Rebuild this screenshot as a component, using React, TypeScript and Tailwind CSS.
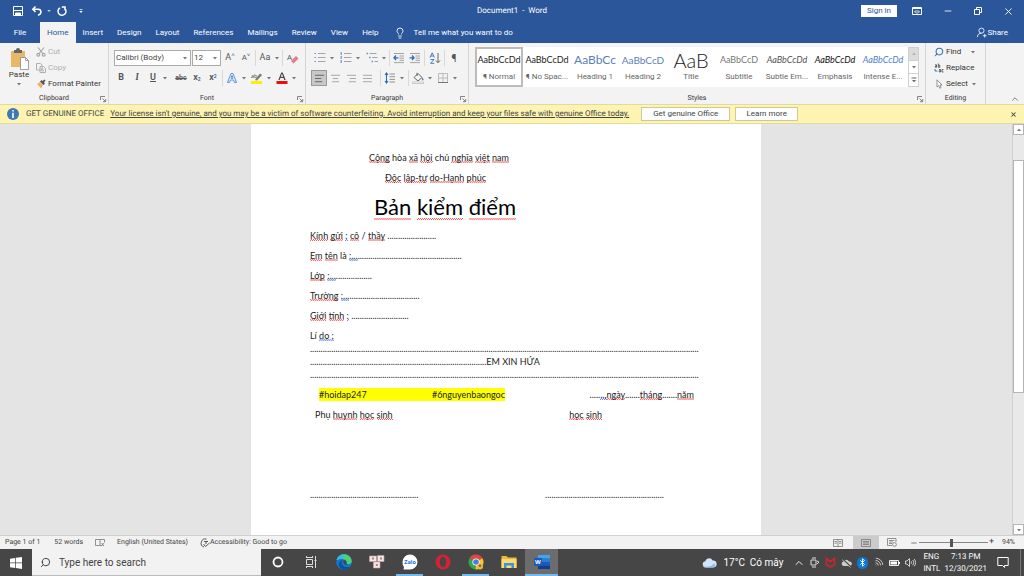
import type { ReactNode } from "react";
import {
  AlignCenter,
  AlignJustify,
  AlignLeft,
  AlignRight,
  Bluetooth,
  ChevronUp,
  Lightbulb,
  Minus,
  Search,
  Wifi,
  X,
} from "lucide-react";

const tabs = ["Home", "Insert", "Design", "Layout", "References", "Mailings", "Review", "View", "Help"];

const styleCards = [
  { name: "¶ Normal", sample: "AaBbCcDd", look: "text-[9px] text-[#222]" },
  { name: "¶ No Spac...", sample: "AaBbCcDd", look: "text-[9px] text-[#222]" },
  { name: "Heading 1", sample: "AaBbCc", look: "text-[12px] text-[#5b7fba]" },
  { name: "Heading 2", sample: "AaBbCcD", look: "text-[10px] text-[#5b7fba]" },
  { name: "Title", sample: "AaB", look: "text-[20px] text-[#222] font-light" },
  { name: "Subtitle", sample: "AaBbCcD", look: "text-[9px] text-[#777]" },
  { name: "Subtle Em...", sample: "AaBbCcDd", look: "text-[9px] text-[#555] italic" },
  { name: "Emphasis", sample: "AaBbCcDd", look: "text-[9px] text-[#111] italic" },
  { name: "Intense E...", sample: "AaBbCcDd", look: "text-[9px] text-[#4f81d0] italic" },
];

function Caret({ className = "" }: { className?: string }) {
  return (
    <svg viewBox="0 0 8 8" className={`size-2 shrink-0 ${className}`} aria-hidden="true">
      <path d="M2 3h4L4 5.4z" fill="#777" />
    </svg>
  );
}

function Divider() {
  return <span className="mx-px h-4 w-px shrink-0 bg-[#d8d8d8]" />;
}

function Tool({ label, children, className = "" }: { label: string; children: ReactNode; className?: string }) {
  return (
    <button aria-label={label} className={`flex h-4 w-4 shrink-0 items-center justify-center text-[#555] ${className}`}>
      {children}
    </button>
  );
}

function More({ label }: { label: string }) {
  return (
    <button aria-label={label} className="flex h-4 w-2 shrink-0 items-center justify-center">
      <Caret />
    </button>
  );
}

function Group({ name, width, launcher = true, children }: { name: string; width: string; launcher?: boolean; children: ReactNode }) {
  return (
    <section className={`flex flex-col border-r border-[#d4d4d4] ${width}`}>
      <div className="h-[50px]">{children}</div>
      <footer className="flex items-center px-px">
        <span className="w-2" />
        <h2 className="flex-1 text-center text-[7px] leading-[11px] text-[#333]">{name}</h2>
        {launcher ? (
          <button aria-label={`${name} settings`}>
            <svg viewBox="0 0 8 8" className="size-2" fill="none" stroke="#777" strokeWidth="0.9">
              <path d="M1.500 5V1.500H6M3.500 3.500L6.500 6.500M6.700 4V6.700H4" />
            </svg>
          </button>
        ) : (
          <span className="w-2" />
        )}
      </footer>
    </section>
  );
}

function Spell({ children }: { children: ReactNode }) {
  return (
    <span className="bg-[conic-gradient(#ee5555_25%,transparent_0_50%,#ee5555_0_75%,transparent_0)] bg-[length:2px_2px] bg-bottom bg-repeat-x">
      {children}
    </span>
  );
}

function Grammar({ children }: { children: ReactNode }) {
  return (
    <span className="bg-[conic-gradient(#5580e0_25%,transparent_0_50%,#5580e0_0_75%,transparent_0)] bg-[length:2px_2px] bg-bottom bg-repeat-x">
      {children}
    </span>
  );
}

function TitleBar() {
  return (
    <header className="grid h-[22px] shrink-0 grid-cols-3 items-center bg-[#2b579a] text-white">
      <div className="flex items-center pl-3">
        <button aria-label="Save">
          <svg viewBox="0 0 12 12" className="size-3" fill="none" stroke="white">
            <path d="M1.500 1.500h9v9h-9z" />
            <path d="M1.500 5.500h9" />
            <path d="M3.500 10.500V8h5v2.500z" fill="white" />
          </svg>
        </button>
        <button aria-label="Undo" className="ml-[7px]">
          <svg viewBox="0 0 12 12" className="size-3" fill="none" stroke="white" strokeWidth="1.500">
            <path d="M4.500 1.500L1.800 4.200l2.700 2.700M2 4.200H7c3.800 0 4 5 0 6" />
          </svg>
        </button>
        <svg viewBox="0 0 8 8" className="ml-[2px] size-2">
          <path d="M2.200 3h3.600L4 5z" fill="#c5d2e8" />
        </svg>
        <button aria-label="Redo" className="ml-[3px]">
          <svg viewBox="0 0 12 12" className="size-3" fill="none" stroke="white" strokeWidth="1.500">
            <path d="M4 2.800A4 4 0 1 0 8.300 3M5.800 2H9v3.200" />
          </svg>
        </button>
        <button aria-label="Customize toolbar" className="ml-[9px]">
          <svg viewBox="0 0 8 8" className="size-2">
            <path d="M2.500 2h3v.8h-3zM2.300 4h3.400L4 6z" fill="white" />
          </svg>
        </button>
      </div>
      <h1 className="text-center text-[8px]">Document1&nbsp; -&nbsp; Word</h1>
      <div className="flex items-center justify-end">
        <button className="h-3 w-9 bg-white text-[8px] leading-3 text-[#2b579a]">Sign in</button>
        <button aria-label="Ribbon options" className="ml-[15px]">
          <svg viewBox="0 0 10 8" className="h-2 w-[10px]" fill="none" stroke="white">
            <path d="M.5.5h9v7h-9zM.5 1.500h9" />
            <path d="M3.200 6V4M2.500 4.500L3.300 3.500M6.800 6V4M7.500 4.500L6.700 3.500M5 3v4" strokeWidth=".8" />
          </svg>
        </button>
        <button aria-label="Minimize" className="ml-[21px]">
          <Minus className="size-[10px]" strokeWidth={2} />
        </button>
        <button aria-label="Restore" className="ml-5">
          <svg viewBox="0 0 10 10" className="size-[10px]" fill="none" stroke="white">
            <path d="M1.500 3.500h5v5h-5zM3.500 3V1.500h5v5H7" />
          </svg>
        </button>
        <button aria-label="Close" className="mr-[10px] ml-5">
          <X className="size-[11px]" strokeWidth={2} />
        </button>
      </div>
    </header>
  );
}

function TabBar() {
  return (
    <nav className="flex h-[21px] shrink-0 items-stretch bg-[#2b579a] text-[8px] text-white">
      <button className="w-10">File</button>
      {tabs.map((tab) => (
        <button key={tab} className={tab === "Home" ? "bg-[#f3f3f3] px-[7px] text-[#2b579a]" : "px-[7px]"}>
          {tab}
        </button>
      ))}
      <button className="ml-2 flex items-center gap-2">
        <Lightbulb className="size-3" strokeWidth={1.700} />
        Tell me what you want to do
      </button>
      <button className="mr-4 ml-auto flex items-center gap-px">
        <svg viewBox="0 0 12 12" className="size-[11px]" fill="none" stroke="white" strokeWidth=".9">
          <circle cx="6" cy="4" r="2.800" />
          <path d="M1.500 11c0-3 2-4.200 4.500-4.200M9.500 7.500v4M7.500 9.500h4" />
        </svg>
        Share
      </button>
    </nav>
  );
}

function ClipboardGroup() {
  return (
    <Group name="Clipboard" width="w-[109px] shrink-0">
      <div className="flex gap-[3px] pt-px pl-[9px]">
        <button className="flex w-5 flex-col items-center pt-1 text-[8px] leading-[10px] text-[#333]">
          <svg viewBox="0 0 20 22" className="h-[22px] w-5">
            <path d="M2 3h14v16H2z" fill="#e8b866" />
            <path d="M5 2h2a2 2 0 0 1 4 0h2v3H5z" fill="#666" />
            <path d="M11.500 9.500h5l3 3v9h-8z" fill="white" stroke="#888" strokeWidth=".8" />
            <path d="M16.500 9.500v3h3" fill="none" stroke="#888" strokeWidth=".8" />
          </svg>
          Paste
          <Caret />
        </button>
        <div className="flex flex-col pl-1 text-[8px] text-[#333]">
          <button className="flex h-4 items-center gap-[2px] text-[#b0b0b0]">
            <svg viewBox="0 0 10 10" className="size-[10px]" fill="none" stroke="#a8a8a8" strokeWidth="1.200">
              <path d="M2 .5l4.800 6M8 .5L3.200 6.500" />
              <circle cx="2.300" cy="7.700" r="1.400" />
              <circle cx="7.700" cy="7.700" r="1.400" />
            </svg>
            Cut
          </button>
          <button className="flex h-4 items-center gap-[2px] text-[#b0b0b0]">
            <svg viewBox="0 0 10 10" className="size-[10px]" fill="#f3f3f3" stroke="#b0b0b0">
              <path d="M.5.5h4l1.500 1.500v5H.5zM4 3.500h3.500l2 2v4H4zM5.500 6h2M5.500 7.800h2.500" />
            </svg>
            Copy
          </button>
          <button className="flex h-4 items-center gap-[2px] whitespace-nowrap">
            <svg viewBox="0 0 10 10" className="size-[10px]">
              <path d="M1 5l3-2 3 3-2 3.500z" fill="#e9b560" />
              <path d="M4 2.500l3.500 3.500L9 4.500 8 3.500 9.500 1.500 8.500.5 6.500 2 5.500 1z" fill="#555" />
            </svg>
            Format Painter
          </button>
        </div>
      </div>
    </Group>
  );
}

function FontGroup() {
  return (
    <Group name="Font" width="w-[197px] shrink-0">
      <div className="flex items-center pt-[7px] pl-[5px]">
        <label className="relative flex h-4 w-[77px] items-center border border-[#ababab] bg-white">
          <select aria-label="Font name" className="w-full appearance-none px-px text-[8px] text-[#444]">
            <option>Calibri (Body)</option>
          </select>
          <Caret className="pointer-events-none absolute right-px" />
        </label>
        <label className="relative ml-px flex h-4 w-[29px] items-center border border-[#ababab] bg-white">
          <select aria-label="Font size" className="w-full appearance-none px-px text-[8px] text-[#444]">
            <option>12</option>
          </select>
          <Caret className="pointer-events-none absolute right-px" />
        </label>
        <Tool label="Grow font" className="ml-px text-[9px]">
          A<sup className="text-[6px] text-[#2b579a]">˄</sup>
        </Tool>
        <Tool label="Shrink font" className="text-[8px]">
          A<sup className="text-[6px] text-[#2b579a]">˅</sup>
        </Tool>
        <Divider />
        <Tool label="Change case" className="text-[9px]">Aa</Tool>
        <More label="Case options" />
        <Divider />
        <Tool label="Clear formatting" className="ml-px">
          <svg viewBox="0 0 12 12" className="size-3">
            <text x="0" y="8" fontSize="8" fill="#555" fontFamily="Open Sans">A</text>
            <path d="M4 9l5-5 2.500 2.500-5 5z" fill="#e8788a" />
          </svg>
        </Tool>
      </div>
      <div className="flex items-center pt-1 pl-1 text-[9px]">
        <Tool label="Bold" className="font-bold">B</Tool>
        <Tool label="Italic" className="font-serif font-bold italic">I</Tool>
        <Tool label="Underline" className="font-semibold underline">U</Tool>
        <More label="Underline options" />
        <Tool label="Strikethrough" className="ml-1 text-[7px] font-semibold line-through">abc</Tool>
        <Tool label="Subscript" className="font-semibold">
          x<sub className="text-[5px] text-[#2b579a]">2</sub>
        </Tool>
        <Tool label="Superscript" className="font-semibold">
          x<sup className="text-[5px] text-[#2b579a]">2</sup>
        </Tool>
        <Divider />
        <Tool label="Text effects">
          <svg viewBox="0 0 12 12" className="size-3" fill="none" stroke="#5b93d6" strokeWidth="1">
            <path d="M1.500 10.500L5 1.500h2l3.500 9h-2l-.9-2.500H4.400l-.9 2.500zM5 6.300h2L6 3.500z" />
          </svg>
        </Tool>
        <More label="Text effect options" />
        <Tool label="Highlight" className="ml-px">
          <svg viewBox="0 0 12 12" className="size-3">
            <text x="0" y="5.500" fontSize="5.500" fill="#444" fontFamily="Open Sans">ab</text>
            <path d="M4 8l5-6.500 2 1.500-5 5.500z" fill="#777" />
            <path d="M0 9h11v3H0z" fill="#ffee00" />
          </svg>
        </Tool>
        <More label="Highlight colours" />
        <Tool label="Font colour" className="ml-px">
          <svg viewBox="0 0 12 12" className="size-3">
            <path d="M2.300 8L5.300.5h1.400l3 7.500H8.300l-.7-2H4.300l-.7 2zM4.700 4.800h2.500L6 1.800z" fill="#444" />
            <path d="M.5 9h11v3H.5z" fill="#e81010" />
          </svg>
        </Tool>
        <More label="Font colours" />
      </div>
    </Group>
  );
}

function ListIcon({ dots }: { dots: string }) {
  return (
    <svg viewBox="0 0 12 12" className="size-3" fill="none">
      <path d={dots} stroke="#6a93c5" strokeWidth="1.200" />
      <path d="M4 1.500h7.500M4 5.500h7.500M4 9.500h7.500" stroke="#a5a5a5" />
    </svg>
  );
}

function DentIcon({ arrow }: { arrow: string }) {
  return (
    <svg viewBox="0 0 12 12" className="size-3" fill="none">
      <path d="M1 1.500h10M6.500 4h4.500M6.500 6.200h4.500M6.500 8.400h4.500M1 10.600h10" stroke="#999" strokeWidth=".9" />
      <path d={arrow} stroke="#2b6cb5" strokeWidth="1.300" />
    </svg>
  );
}

function ParagraphGroup() {
  return (
    <Group name="Paragraph" width="w-[163px] shrink-0">
      <div className="flex items-center pt-[7px] pl-[6px]">
        <Tool label="Bullets"><ListIcon dots="M.5 1.500h1.500M.5 5.500h1.500M.5 9.500h1.500" /></Tool>
        <More label="Bullet options" />
        <Tool label="Numbering" className="ml-[2px]"><ListIcon dots="M1.200 0v3M1.200 4v3M1.200 8v3" /></Tool>
        <More label="Numbering options" />
        <Tool label="Multilevel list" className="ml-[2px]">
          <svg viewBox="0 0 12 12" className="size-3" fill="none">
            <path d="M.5 1.500h1.500M3 5.500h1.500M5.500 9.500h1.500" stroke="#6a93c5" strokeWidth="1.400" />
            <path d="M3.500 1.500h7M6 5.500h5.500M8.500 9.500H12" stroke="#a5a5a5" />
          </svg>
        </Tool>
        <More label="Multilevel options" />
        <Divider />
        <Tool label="Decrease indent"><DentIcon arrow="M5.500 5.800H1M3 3.500L1 5.800 3 8" /></Tool>
        <Tool label="Increase indent"><DentIcon arrow="M.5 5.800H5M3 3.500l2 2.300L3 8" /></Tool>
        <Divider />
        <Tool label="Sort" className="ml-px">
          <svg viewBox="0 0 12 12" className="size-3" fill="none" stroke="#4a7ebb">
            <path d="M1 5.500L3.200.8l2.200 4.700M1.800 4h2.800M1.500 7.500h3.500L1.500 11.300H5.300" />
            <path d="M9 1v9.500M7 8.500l2 2.300 2-2.300" stroke="#666" />
          </svg>
        </Tool>
        <Divider />
        <Tool label="Show marks" className="text-[10px]">¶</Tool>
      </div>
      <div className="flex items-center pt-1 pl-[5px]">
        <Tool label="Align left" className="border border-[#999] bg-[#c8c8c8]"><AlignLeft className="size-[11px]" strokeWidth={1.800} /></Tool>
        <Tool label="Centre"><AlignCenter className="size-[11px] text-[#777]" strokeWidth={1.300} /></Tool>
        <Tool label="Align right"><AlignRight className="size-[11px] text-[#777]" strokeWidth={1.300} /></Tool>
        <Tool label="Justify"><AlignJustify className="size-[11px] text-[#777]" strokeWidth={1.300} /></Tool>
        <span className="w-1" />
        <Divider />
        <Tool label="Line spacing">
          <svg viewBox="0 0 12 12" className="size-3" fill="none">
            <path d="M2.500 1v10M1 3l1.500-2L4 3M1 9l1.500 2L4 9" stroke="#2b6cb5" strokeWidth="1.100" />
            <path d="M5.500 2h5.500M5.500 4.700h5.500M5.500 7.400h5.500M5.500 10h5.500" stroke="#888" strokeWidth=".9" />
          </svg>
        </Tool>
        <More label="Line spacing options" />
        <span className="w-px" />
        <Divider />
        <Tool label="Shading">
          <svg viewBox="0 0 12 12" className="size-3" fill="none">
            <path d="M2 5.500l4-4 4 4-4 3.500zM5 4V.8" stroke="#666" />
            <path d="M10.500 5.500c1.500 2 1 3 .3 3s-1-1-.3-3z" fill="#2b6cb5" />
            <path d="M.5 10h11v1.500H.5z" fill="white" stroke="#aaa" strokeWidth=".6" />
          </svg>
        </Tool>
        <More label="Shading options" />
        <Tool label="Borders" className="ml-px">
          <svg viewBox="0 0 12 12" className="size-3" fill="none">
            <path d="M1.500 1.500h9v9h-9zM6 1.500v9M1.500 6h9" stroke="#bbb" />
            <path d="M1 10.500h10" stroke="#777" />
          </svg>
        </Tool>
        <More label="Border options" />
      </div>
    </Group>
  );
}

function StylesGroup() {
  return (
    <Group name="Styles" width="min-w-0 flex-1">
      <div className="flex pt-1 pr-[6px] pl-[6px]">
        <div className="flex h-10 min-w-0 flex-1 overflow-hidden bg-white">
          {styleCards.map((card, i) => (
            <button
              key={card.name}
              className={`flex h-10 w-12 shrink-0 flex-col overflow-hidden border-2 ${i === 0 ? "border-[#bcbcbc]" : "border-transparent"}`}
            >
              <span className={`flex h-[22px] w-full items-center justify-center font-['Lato','Open_Sans',sans-serif] leading-[22px] whitespace-nowrap ${card.look}`}>
                {card.sample}
              </span>
              <span className="w-full text-center text-[8px] leading-3 whitespace-nowrap text-[#666]">{card.name}</span>
            </button>
          ))}
        </div>
        <div className="flex h-10 w-[11px] shrink-0 flex-col border border-[#d0d0d0] bg-white">
          <button aria-label="Previous styles" className="flex flex-1 items-center justify-center bg-[#dcdcdc]"><Caret className="rotate-180 opacity-40" /></button>
          <button aria-label="Next styles" className="flex flex-1 items-center justify-center border-y border-[#d0d0d0]"><Caret /></button>
          <button aria-label="All styles" className="flex flex-1 items-center justify-center">
            <svg viewBox="0 0 8 8" className="size-2" fill="#666">
              <path d="M1.500 1.500h5v.9h-5zM2 4h4L4 6.200z" />
            </svg>
          </button>
        </div>
      </div>
    </Group>
  );
}

function EditingGroup() {
  return (
    <Group name="Editing" width="w-[60px] shrink-0" launcher={false}>
      <div className="flex flex-col pt-px pl-2 text-[8px] text-[#333]">
        <button className="flex h-4 items-center gap-[2px]">
          <Search className="size-[10px] -scale-x-100 text-[#3b73b9]" strokeWidth={2.500} />
          Find
          <Caret className="ml-[6px]" />
        </button>
        <button className="flex h-4 items-center gap-[2px]">
          <svg viewBox="0 0 10 10" className="size-[10px]" fill="none" stroke="#555" strokeWidth=".9">
            <path d="M1 1.800h1.500V4.300H1.300V3h1.200M4.300.5v3.800h1.500V2.200H4.300M5 6.500h1.500V9H5.300V7.800h1.200M9.500 6.500H8V9h1.500" />
            <path d="M1 6v2h2.500" stroke="#2b6cb5" />
          </svg>
          Replace
        </button>
        <button className="flex h-4 items-center gap-[2px]">
          <svg viewBox="0 0 10 10" className="size-[10px]" fill="white" stroke="#888" strokeWidth=".9">
            <path d="M3 .8v7.200l1.700-1.500 1.200 2.800 1.200-.6L6 6h2z" />
          </svg>
          Select
          <Caret />
        </button>
      </div>
    </Group>
  );
}

function GenuineBar() {
  return (
    <aside className="flex h-5 shrink-0 items-center border-y border-[#e2daa0] bg-[#fcf4b0] pl-[7px] text-[8px] whitespace-nowrap text-[#444]">
      <svg viewBox="0 0 12 12" className="size-3 shrink-0">
        <circle cx="6" cy="6" r="6" fill="#3c78b8" />
        <path d="M5.200 2h1.600v1.600H5.200zM5.200 4.700h1.600V10H5.200z" fill="white" />
      </svg>
      <strong className="ml-[7px] font-normal">GET GENUINE OFFICE</strong>
      <a href="#genuine" className="ml-[6px] underline">
        Your license isn't genuine, and you may be a victim of software counterfeiting. Avoid interruption and keep your files safe with genuine Office today.
      </a>
      <button className="ml-3 h-[14px] w-[89px] border border-[#cfc99a] bg-[#fefefe] leading-3">Get genuine Office</button>
      <button className="ml-[5px] h-[14px] w-[63px] border border-[#cfc99a] bg-[#fefefe] leading-3">Learn more</button>
      <button aria-label="Dismiss" className="mr-[7px] ml-auto"><X className="size-[7px]" strokeWidth={3.500} /></button>
    </aside>
  );
}

function Paper() {
  return (
    <article className="mx-auto flex w-full max-w-[510px] flex-col gap-[7px] bg-white pt-[27px] pr-[61px] pl-[59px] font-['Lato','Open_Sans',sans-serif] text-[9px] leading-[13px] whitespace-nowrap text-[#222] [text-rendering:auto]">
      <p className="pl-[59px]"><Spell>Cộng</Spell> hòa <Spell>xã</Spell> <Spell>hội</Spell> chủ <Spell>nghĩa</Spell> <Spell>việt</Spell> <Spell>nam</Spell></p>
      <p className="pl-[75px]"><Spell>Độc</Spell> <Spell>lập-tự</Spell> <Spell>do-Hạnh</Spell> <Spell>phúc</Spell></p>
      <h2 className="pl-16 text-[22px] leading-[31px] text-black"><Spell>Bản</Spell> <Spell>kiểm</Spell> <Spell>điểm</Spell></h2>
      <p><Spell>Kính</Spell> <Spell>gửi</Spell> <Grammar>:</Grammar> <Spell>cô</Spell> / <Spell>thầy</Spell> {".".repeat(23)}</p>
      <p><Spell>Em</Spell> <Spell>tên</Spell> là <Grammar>:...</Grammar>{".".repeat(49)}</p>
      <p><Spell>Lớp</Spell> <Grammar>:...</Grammar>{".".repeat(17)}</p>
      <p><Spell>Trường</Spell> <Grammar>:...</Grammar>{".".repeat(33)}</p>
      <p><Spell>Giới</Spell> <Spell>tính</Spell> <Grammar>:</Grammar> {".".repeat(27)}</p>
      <div>
        <p>Lí <Grammar>do :</Grammar></p>
        <p>{".".repeat(183)}</p>
        <p>{".".repeat(83)}EM XIN HỨA</p>
        <p>{".".repeat(183)}</p>
      </div>
      <div className="flex justify-between pr-[6px] pl-[9px]">
        <p className="flex w-[186px] justify-between bg-[#ffff00]"><span>#hoidap247</span><span>#6nguyenbaongoc</span></p>
        <p>.....<Grammar>..,</Grammar><Spell>ngày</Spell>.......<Spell>tháng</Spell>.......<Spell>năm</Spell></p>
      </div>
      <div className="flex justify-between pr-[98px] pl-[5px]">
        <p>Phụ <Spell>huynh</Spell> <Spell>học</Spell> <Spell>sinh</Spell></p>
        <p><Spell>học</Spell> <Spell>sinh</Spell></p>
      </div>
      <div className="flex justify-between pt-[60px] pr-9">
        <p>{".".repeat(51)}</p>
        <p>{".".repeat(56)}</p>
      </div>
    </article>
  );
}

function DocumentArea() {
  return (
    <main className="flex min-h-0 flex-1 bg-[#e4e4e4]">
      <div className="flex min-w-0 flex-1 overflow-hidden">
        <Paper />
      </div>
      <div className="flex w-3 flex-col border-l border-[#d0d0d0] bg-[#e9e9e9]">
        <button aria-label="Scroll up" className="flex h-[11px] items-center justify-center border border-[#b5b5b5] bg-white"><Caret className="rotate-180" /></button>
        <div className="grow-[25]" />
        <div className="grow-[232] border border-[#b5b5b5] bg-white" />
        <div className="grow-[132]" />
        <button aria-label="Scroll down" className="flex h-[11px] items-center justify-center border border-[#b5b5b5] bg-white"><Caret /></button>
      </div>
    </main>
  );
}

function StatusBar() {
  return (
    <footer className="flex h-[14px] shrink-0 items-center border-t border-[#d0d0d0] bg-[#f2f2f2] pl-[5px] text-[7px] whitespace-nowrap text-[#444]">
      <span>Page 1 of 1</span>
      <span className="ml-[14px]">52 words</span>
      <svg viewBox="0 0 10 9" className="ml-3 h-[9px] w-[10px]" fill="none" stroke="#777" strokeWidth=".8">
        <path d="M5 1.500H.5v6H5zM5 1.500h4.500v3M5 7.500h2M6.500 5l2.500 3M9 5L6.500 8" />
      </svg>
      <span className="ml-3">English (United States)</span>
      <svg viewBox="0 0 10 10" className="ml-3 size-[10px]" fill="none" stroke="#555">
        <path d="M6.500 1.200A4 4 0 1 0 4 9M4 3.500h4M6 3.500V6M3.500 6l2 2.500L9.500 5" />
      </svg>
      <span>Accessibility: Good to go</span>
      <div className="ml-auto flex h-full items-center">
        <button aria-label="Read mode" className="flex w-6 justify-center">
          <svg viewBox="0 0 10 8" className="h-2 w-[10px]" fill="none" stroke="#777" strokeWidth=".8">
            <path d="M.5.5H5v7H.5zM5 .5h4.500v7H5M1.500 2.500h2.500M1.500 4.200h2.500M6 2.500h2.500M6 4.200h2.500" />
          </svg>
        </button>
        <button aria-label="Print layout" className="ml-[3px] flex h-full w-[26px] items-center justify-center bg-[#cbcbcb]">
          <svg viewBox="0 0 10 8" className="h-2 w-[10px]" fill="none" stroke="#777" strokeWidth=".8">
            <path d="M.5.5h9v7h-9zM2 2.500h6M2 4h6M2 5.500h6" />
          </svg>
        </button>
        <button aria-label="Web layout" className="flex w-[27px] justify-center">
          <svg viewBox="0 0 10 9" className="h-[9px] w-[10px]" fill="none" stroke="#777" strokeWidth=".8">
            <path d="M9 4V.5H.5v7H5M2 2.500h5.500M2 4h4M2 5.500h3" />
            <circle cx="7.500" cy="6.500" r="1.900" />
          </svg>
        </button>
        <button aria-label="Zoom out" className="ml-1"><Minus className="size-2" /></button>
        <input
          type="range"
          aria-label="Zoom"
          min={10}
          max={190}
          defaultValue={94}
          className="mx-px h-2 w-[69px] appearance-none bg-[linear-gradient(#888,#888)] bg-[length:100%_1px] bg-center bg-no-repeat [&::-webkit-slider-thumb]:h-2 [&::-webkit-slider-thumb]:w-[3px] [&::-webkit-slider-thumb]:appearance-none [&::-webkit-slider-thumb]:bg-[#555]"
        />
        <span className="text-[9px] leading-none">+</span>
        <span className="mr-[9px] ml-2">94%</span>
      </div>
    </footer>
  );
}

function TaskApp({ label, open = false, active = false, children }: { label: string; open?: boolean; active?: boolean; children: ReactNode }) {
  return (
    <button aria-label={label} className={`flex h-full w-[33px] flex-col items-center ${active ? "bg-[#6c6c6c]" : "px-[3px]"}`}>
      <span className="flex flex-1 items-center">{children}</span>
      <span className={`h-[2px] w-full ${open ? "bg-[#76b9ed]" : ""}`} />
    </button>
  );
}

function Taskbar() {
  return (
    <footer className="flex h-[27px] shrink-0 items-center bg-[#464646] text-white">
      <button aria-label="Start" className="flex w-8 justify-center">
        <svg viewBox="0 0 12 12" className="size-3" fill="white">
          <path d="M0 1.700l5.300-.8v4.700H0zM6 .8L12 0v5.600H6zM0 6.300h5.300V11L0 10.300zM6 6.300h6V12l-6-.9z" />
        </svg>
      </button>
      <label className="flex h-full w-[229px] items-center gap-2 border-b border-[#bbb] bg-[#f2f2f2] pl-2 text-[#333]">
        <Search className="size-[11px] -scale-x-100" strokeWidth={2} />
        <input aria-label="Search" placeholder="Type here to search" className="min-w-0 flex-1 text-[10px] outline-none placeholder:text-[#444]" />
      </label>
      <TaskApp label="Cortana">
        <svg viewBox="0 0 12 12" className="size-3" fill="none" stroke="white" strokeWidth="1.800"><circle cx="6" cy="6" r="4.500" /></svg>
      </TaskApp>
      <TaskApp label="Task view">
        <svg viewBox="0 0 12 12" className="size-3" fill="none" stroke="#ddd">
          <path d="M1.500 3.500h6v5h-6zM1.500 0v2M7.500 0v2M1.500 10v2M7.500 10v2M1 1.500h7M1 10.500h7M10.500 0v12M9.500 4.500h2" />
        </svg>
      </TaskApp>
      <TaskApp label="Edge">
        <svg viewBox="0 0 16 16" className="size-4">
          <circle cx="8" cy="8" r="7.800" fill="#1478cf" />
          <path d="M.6 6C2 1 7-.5 10.500.6c4 1.200 5.500 4.800 5.200 7-.3 2.400-3.200 3.200-5.200 2.200C11.500 7 9 5 6 5 3.500 5 1.500 5.500.6 6z" fill="#4cd07b" />
          <path d="M.6 6C2 1 6.500 0 9 .4 5 1 9 5 6 5 3.500 5 1.500 5.500.6 6z" fill="#35b9e0" />
          <path d="M6.500 6C4 8.500 6 14.500 14 12.800c-3 4-9 3.500-11-.8C2 9 3.500 6.500 6.500 6z" fill="#0c4f9e" />
          <path d="M7.500 6.500c2-.8 3.500 1 3 2.700-.2.900.5 1.300 1.500 1.500-3 .9-6-1.700-4.500-4.200z" fill="#464646" />
        </svg>
      </TaskApp>
      <TaskApp label="Keyboard tool">
        <svg viewBox="0 0 16 14" className="h-[14px] w-4">
          <path d="M.5 1h7v5.500h-7zM8.500.5H15v6H8.500zM4.500 7h6.500v6H4.500z" fill="#f3e6e4" stroke="#c9a6a2" strokeWidth=".6" />
          <path d="M3 2.500h2v2H3zM11 2.500h2v2h-2zM6.800 9h2v2h-2z" fill="#b08080" />
        </svg>
      </TaskApp>
      <TaskApp label="Zalo" open>
        <svg viewBox="0 0 16 16" className="size-4">
          <path d="M.5 8a7.500 7.500 0 1 1 7.500 7.500H1.500L2 13A7.500 7.500 0 0 1 .5 8z" fill="white" />
          <text x="8" y="9.800" fontSize="5.500" fontWeight="700" textAnchor="middle" fill="#1a6ff0" fontFamily="Open Sans">Zalo</text>
        </svg>
      </TaskApp>
      <TaskApp label="Opera">
        <svg viewBox="0 0 16 16" className="size-4">
          <circle cx="8" cy="8" r="7.500" fill="#d81f33" />
          <ellipse cx="8" cy="8" rx="3.200" ry="5.200" fill="#464646" />
        </svg>
      </TaskApp>
      <TaskApp label="Chrome" open>
        <svg viewBox="0 0 16 16" className="size-4">
          <path d="M8 8L1.500 4.300A7.500 7.500 0 0 1 14.500 4.300z" fill="#e5483b" />
          <path d="M8 8L1.500 4.300A7.500 7.500 0 0 0 7.500 15.500z" fill="#2fa651" />
          <path d="M8 8l6.500-3.700A7.500 7.500 0 0 1 7.500 15.500z" fill="#fbc62c" />
          <circle cx="8" cy="8" r="3.600" fill="white" />
          <circle cx="8" cy="8" r="2.800" fill="#3d7ff0" />
          <circle cx="12" cy="12.500" r="3" fill="#e9b84b" />
          <circle cx="12" cy="11.700" r="1.200" fill="#8a5a2b" />
        </svg>
      </TaskApp>
      <TaskApp label="File Explorer">
        <svg viewBox="0 0 16 14" className="h-[14px] w-4">
          <path d="M.5 1h5l1.500 1.500h8.500V13H.5z" fill="#f0b93a" />
          <path d="M.5 4h15v9H.5z" fill="#fbd975" />
          <path d="M3 8h10v5h-2.500v-2.500h-5V13H3z" fill="#3f94d3" />
        </svg>
      </TaskApp>
      <TaskApp label="Word" open active>
        <svg viewBox="0 0 16 16" className="size-4">
          <path d="M4 1h12v3.500H4z" fill="#41a5ee" />
          <path d="M4 4.500h12V8H4z" fill="#2b7cd3" />
          <path d="M4 8h12v3.500H4z" fill="#185abd" />
          <path d="M4 11.500h12V15H4z" fill="#103f91" />
          <path d="M0 4h8v8H0z" fill="#185abd" />
          <text x="4" y="10.200" fontSize="6" fontWeight="700" textAnchor="middle" fill="white" fontFamily="Open Sans">W</text>
        </svg>
      </TaskApp>
      <div className="ml-auto flex h-full items-center text-[8px]">
        <button className="flex items-center gap-[6px] text-[10px] whitespace-nowrap">
          <svg viewBox="0 0 15 11" className="h-[11px] w-[15px]">
            <path d="M3.500 10.500a3.200 3.200 0 0 1-.3-6.300 4 4 0 0 1 7.500-.7 3.500 3.500 0 0 1 .8 7z" fill="#cfe5fa" />
            <path d="M2 9.500c4 .5 8 0 10-3 2 1 1 4-1 4h-8z" fill="#8cbcec" />
          </svg>
          <span>17°C&nbsp; Có mây</span>
        </button>
        <button aria-label="Hidden icons" className="ml-[10px]"><ChevronUp className="size-3" strokeWidth={1.800} /></button>
        <div className="ml-1 flex items-center gap-[5px]">
          <svg viewBox="0 0 11 11" className="size-[11px]" fill="none" stroke="#ddd">
            <path d="M2 3h5v5H2zM3 1h4M3 10h4M8 4l2 1-2 2" />
          </svg>
          <svg viewBox="0 0 11 11" className="size-[11px]" fill="none" stroke="#c5282f" strokeWidth="1.800">
            <path d="M1.500 1.500v6L5.500 10l4-2.500v-6L5.500 4.500z" />
          </svg>
          <svg viewBox="0 0 11 11" className="size-[11px]">
            <path d="M2.500 9a2.300 2.300 0 0 1 0-4.500 3 3 0 0 1 5.500 0A2.300 2.300 0 0 1 9 9z" fill="#ccc" />
            <path d="M1 1.500l9 8.500" stroke="#464646" strokeWidth="1.500" />
            <path d="M1 2.500l8.500 8" stroke="#ccc" strokeWidth=".8" />
          </svg>
          <span className="flex h-3 w-[11px] items-center justify-center rounded-full bg-[#0a78d8]"><Bluetooth className="size-[9px]" strokeWidth={2.500} /></span>
          <Wifi className="size-[11px] rotate-45 text-[#ccc]" />
          <svg viewBox="0 0 11 11" className="size-[11px]">
            <path d="M.5 3.500h9v5h-9z" fill="none" stroke="#eee" />
            <path d="M1.500 4.500h6.500v3H1.500zM10 5h1v2h-1z" fill="white" />
          </svg>
          <svg viewBox="0 0 11 11" className="size-[11px]" fill="none" stroke="#ddd" strokeWidth=".9">
            <path d="M.5 4h1.500l2.500-2.500v8L2 7H.5zM6 4.200c.8 1 .8 1.800 0 2.700M7.700 3c1.300 1.800 1.300 3.500 0 5.200M9.300 2c1.700 2.500 1.700 4.800 0 7.200" />
          </svg>
        </div>
        <div className="ml-[7px] w-4 leading-3"><p>ENG</p><p>INTL</p></div>
        <div className="ml-[5px] text-center leading-3 whitespace-nowrap"><p>7:13 PM</p><p>12/30/2021</p></div>
        <button aria-label="Notifications" className="ml-[10px] border-r border-[#777] pr-[11px]">
          <svg viewBox="0 0 12 12" className="h-[27px] w-3" fill="none" stroke="white">
            <path d="M.8 1h10.400v8H7.500v2L5.500 9H.8z" />
          </svg>
        </button>
        <span className="w-[3px]" />
      </div>
    </footer>
  );
}

export default function App() {
  return (
    <div className="flex h-screen flex-col overflow-hidden bg-[#e4e4e4] font-['Roboto','Open_Sans',sans-serif] [text-rendering:geometricPrecision]">
      <TitleBar />
      <TabBar />
      <div className="flex h-[61px] shrink-0 items-stretch bg-[#f3f3f3]">
        <ClipboardGroup />
        <FontGroup />
        <ParagraphGroup />
        <StylesGroup />
        <EditingGroup />
        <button aria-label="Collapse ribbon" className="flex w-[38px] shrink-0 items-end justify-end pr-1">
          <ChevronUp className="size-[10px] text-[#666]" />
        </button>
      </div>
      <GenuineBar />
      <DocumentArea />
      <StatusBar />
      <Taskbar />
    </div>
  );
}
